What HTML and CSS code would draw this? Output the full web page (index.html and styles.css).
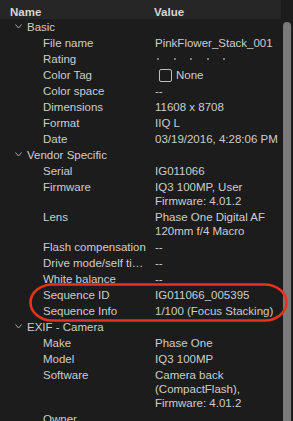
FILE: index.html
```html
<!DOCTYPE html>
<html>
<head>
<meta charset="utf-8">
<link rel="stylesheet" href="styles.css">
</head>
<body>
<div class="panel">
  <div class="table">
    <div class="head">
      <div class="hname">Name</div>
      <div class="hvalue">Value</div>
    </div>
    <div class="rows">
      <div class="group"><svg class="chev" width="7" height="5" viewBox="0 0 7 5"><polyline points="0.5,0.5 3.5,4 6.5,0.5" fill="none" stroke="#a8a8a8" stroke-width="1"/></svg><span>Basic</span></div>
      <div class="row"><div class="k">File name</div><div class="v">PinkFlower_Stack_001</div></div>
      <div class="row"><div class="k">Rating</div><div class="v dots"><i></i><i></i><i></i><i></i><i></i></div></div>
      <div class="row"><div class="k">Color Tag</div><div class="v tag"><span class="box"></span>None</div></div>
      <div class="row"><div class="k">Color space</div><div class="v">--</div></div>
      <div class="row"><div class="k">Dimensions</div><div class="v">11608 x 8708</div></div>
      <div class="row"><div class="k">Format</div><div class="v">IIQ L</div></div>
      <div class="row"><div class="k">Date</div><div class="v">03/19/2016, 4:28:06 PM</div></div>
      <div class="group"><svg class="chev" width="7" height="5" viewBox="0 0 7 5"><polyline points="0.5,0.5 3.5,4 6.5,0.5" fill="none" stroke="#a8a8a8" stroke-width="1"/></svg><span>Vendor Specific</span></div>
      <div class="row"><div class="k">Serial</div><div class="v">IG011066</div></div>
      <div class="row"><div class="k">Firmware</div><div class="v multi">IQ3 100MP, User<br>Firmware: 4.01.2</div></div>
      <div class="row"><div class="k">Lens</div><div class="v multi">Phase One Digital AF<br>120mm f/4 Macro</div></div>
      <div class="row"><div class="k">Flash compensation</div><div class="v">--</div></div>
      <div class="row"><div class="k">Drive mode/self timer</div><div class="v">--</div></div>
      <div class="row"><div class="k">White balance</div><div class="v">--</div></div>
      <div class="row"><div class="k">Sequence ID</div><div class="v">IG011066_005395</div></div>
      <div class="row"><div class="k">Sequence Info</div><div class="v">1/100 (Focus Stacking)</div></div>
      <div class="group"><svg class="chev" width="7" height="5" viewBox="0 0 7 5"><polyline points="0.5,0.5 3.5,4 6.5,0.5" fill="none" stroke="#a8a8a8" stroke-width="1"/></svg><span>EXIF - Camera</span></div>
      <div class="row"><div class="k">Make</div><div class="v">Phase One</div></div>
      <div class="row"><div class="k">Model</div><div class="v">IQ3 100MP</div></div>
      <div class="row"><div class="k">Software</div><div class="v multi">Camera back<br>(CompactFlash),<br>Firmware: 4.01.2</div></div>
      <div class="row"><div class="k">Owner</div><div class="v"></div></div>
    </div>
  </div>
  <div class="scroll"><div class="thumb"></div></div>
</div>
<svg class="mark" width="260" height="40" viewBox="0 0 260 40"><rect x="1.5" y="1.5" width="256" height="36" rx="22" ry="18" fill="none" stroke="#e8321c" stroke-width="2.6"/></svg>
</body>
</html>
```

FILE: styles.css
```css
html, body {
  margin: 0;
  padding: 0;
  background: #1c1c1c;
  width: 293px;
  height: 421px;
  overflow: hidden;
}
body {
  position: relative;
  font-family: "Liberation Sans", Arial, sans-serif;
  font-size: 11.5px;
  color: #cdcdcd;
}
.panel {
  display: flex;
  height: 421px;
}
.table {
  width: 281px;
  flex: none;
  overflow: hidden;
}
.head {
  display: flex;
  height: 19px;
  box-sizing: border-box;
  padding-top: 5px;
  line-height: 14px;
  background: #262626;
  font-weight: bold;
  color: #d6d6d6;
}
.hname {
  width: 154px;
  padding-left: 10px;
  box-sizing: border-box;
}
.hvalue {
  flex: 1;
}
.rows {
  display: flex;
  flex-direction: column;
}
.group {
  display: flex;
  align-items: center;
  height: 16px;
  line-height: 14px;
  padding-left: 15px;
}
.chev {
  margin-right: 5px;
  margin-top: -1px;
}
.row {
  display: flex;
  padding: 1px 0;
  line-height: 14px;
}
.k {
  width: 151px;
  padding-left: 43px;
  padding-right: 1px;
  box-sizing: border-box;
  flex: none;
  white-space: nowrap;
  overflow: hidden;
  text-overflow: ellipsis;
}
.v {
  padding-left: 4px;
  flex: 1;
  white-space: nowrap;
  overflow: hidden;
  min-height: 14px;
}
.dots {
  display: flex;
  align-items: center;
  gap: 14.5px;
  padding-left: 6px;
}
.dots i {
  display: block;
  width: 2px;
  height: 2px;
  border-radius: 1px;
  background: #9a9a9a;
}
.tag {
  display: flex;
  align-items: center;
  padding-left: 8px;
}
.box {
  display: inline-block;
  width: 11px;
  height: 11px;
  border: 1px solid #bdbdbd;
  border-radius: 2px;
  margin-right: 4px;
}
.scroll {
  width: 12px;
  flex: none;
  padding-top: 22px;
  padding-left: 2px;
  box-sizing: border-box;
}
.thumb {
  width: 8px;
  height: 420px;
  background: #7a7a7a;
  border-radius: 4px 4px 0 0;
}
.mark {
  position: absolute;
  left: 29px;
  top: 283px;
}
```
